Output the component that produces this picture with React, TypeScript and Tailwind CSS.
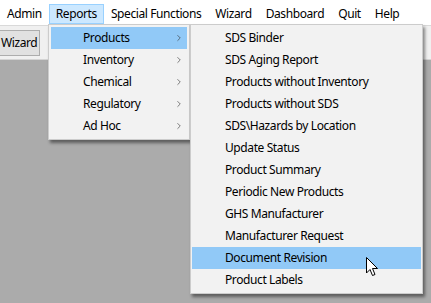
import { ChevronRight } from 'lucide-react';

const topMenu = ['Admin', 'Reports', 'Special Functions', 'Wizard', 'Dashboard', 'Quit', 'Help'];
const reportItems = ['Products', 'Inventory', 'Chemical', 'Regulatory', 'Ad Hoc'];
const productItems = [
  'SDS Binder',
  'SDS Aging Report',
  'Products without Inventory',
  'Products without SDS',
  'SDS\\Hazards by Location',
  'Update Status',
  'Product Summary',
  'Periodic New Products',
  'GHS Manufacturer',
  'Manufacturer Request',
  'Document Revision',
  'Product Labels',
];

function Cursor() {
  return (
    <svg width="13" height="20" viewBox="0 0 13 20" className="absolute left-[366px] top-[257px]">
      <path d="M0.5 0.5 L0.5 16 L4 12.5 L6.5 18.5 L9 17.5 L6.5 11.5 L11.5 11.5 Z" fill="#fff" stroke="#000" strokeWidth="1" />
    </svg>
  );
}

export default function App() {
  return (
    <div className="relative flex h-[303px] w-[431px] flex-col overflow-hidden bg-[#ababab] font-['Noto_Sans','Open_Sans',sans-serif] text-[12px] tracking-[-0.4px] text-black">
      {/* menu bar */}
      <div className="flex h-[25px] items-center bg-white pt-[3px]">
        {topMenu.map((m) => (
          <div
            key={m}
            className={
              m === 'Reports'
                ? 'flex h-[20px] items-center border border-[#99d1ff] bg-[#cce8ff] px-[6px]'
                : 'flex h-[20px] items-center px-[7px]'
            }
          >
            {m}
          </div>
        ))}
      </div>

      {/* toolbar */}
      <div className="flex h-[34px] items-center border-t border-[#d9d9d9] bg-[#f0f0f0]">
        <div className="flex h-[26px] w-[40px] items-center border border-l-0 border-[#adadad] bg-[#e1e1e1] pl-[1px]">
          Wizard
        </div>
      </div>
      <div className="h-[1px] bg-[#d4d4d4]" />
      <div className="flex-1 bg-[#ababab]" />

      {/* Reports dropdown */}
      <div className="absolute left-[48px] top-[24px] w-[142px] border border-[#cccccc] bg-[#f2f2f2] p-[2px] shadow-[2px_3px_3px_rgba(0,0,0,0.45)]">
        {reportItems.map((r) => (
          <div
            key={r}
            className={`flex h-[22px] items-center justify-between pl-[32px] pr-[3px] ${r === 'Products' ? 'bg-[#91c9f7]' : ''}`}
          >
            <span>{r}</span>
            <ChevronRight size={10} strokeWidth={1.5} className="text-[#333]" />
          </div>
        ))}
      </div>

      {/* Products submenu */}
      <div className="absolute left-[190px] top-[24px] w-[233px] border border-[#cccccc] bg-[#f2f2f2] px-[1px] py-[2px] shadow-[2px_3px_3px_rgba(0,0,0,0.45)]">
        {productItems.map((p) => (
          <div
            key={p}
            className={`flex h-[22px] items-center pl-[33px] ${p === 'Document Revision' ? 'bg-[#91c9f7]' : ''}`}
          >
            {p}
          </div>
        ))}
      </div>

      <Cursor />
    </div>
  );
}
